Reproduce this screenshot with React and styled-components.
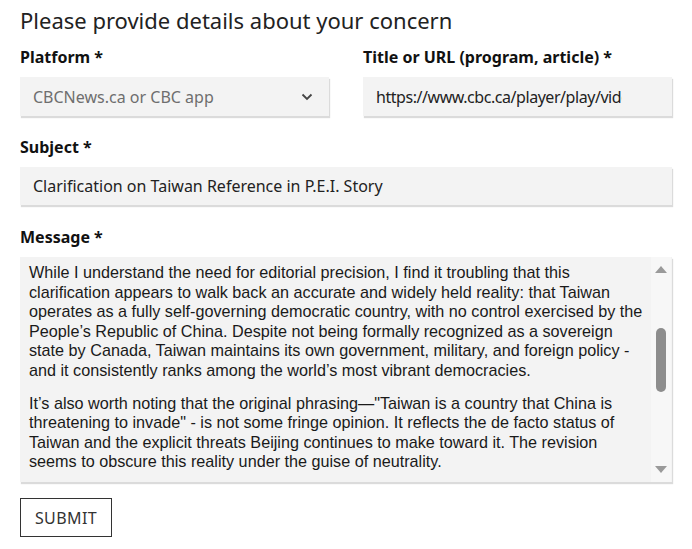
import React from "react";
import styled, { createGlobalStyle } from "styled-components";

const Global = createGlobalStyle`
  html, body { margin: 0; padding: 0; background: #fff; }
  body { font-family: "Noto Sans", "Open Sans", sans-serif; color: #111; }
  * { box-sizing: border-box; }
`;

const Page = styled.form`
  width: 692px;
  padding: 5px 20px 0 20px;
  display: flex;
  flex-direction: column;
`;

const Heading = styled.h2`
  margin: 0 0 11px 0;
  font-size: 22px;
  font-weight: 400;
  line-height: 30px;
  color: #222;
`;

const Row = styled.div`
  display: grid;
  grid-template-columns: minmax(0, 1fr) minmax(0, 1fr);
  column-gap: 34px;
`;

const Field = styled.div`
  display: flex;
  flex-direction: column;
  min-width: 0;
  margin-bottom: ${(p) => p.$mb ?? 20}px;
`;

const Label = styled.label`
  font-size: 16px;
  font-weight: 700;
  line-height: 22px;
  color: #111;
  margin-bottom: 9px;
`;

const InputBox = styled.div`
  height: ${(p) => p.$h || 39}px;
  background: #f3f3f3;
  box-shadow: 1px 2px 1px rgba(0, 0, 0, 0.14);
  display: flex;
  align-items: center;
  padding: 0 ${(p) => p.$pr ?? 13}px 0 13px;
  font-size: 16px;
  color: ${(p) => (p.$muted ? "#6e6e6e" : "#222")};
  white-space: nowrap;
  overflow: hidden;
`;

const Clip = styled.span`
  display: block;
  overflow: hidden;
  flex: 1;
  min-width: 0;
  letter-spacing: -0.45px;
`;

const SelectText = styled.span`
  flex: 1;
`;

const Chevron = styled.svg`
  width: 12px;
  height: 8px;
  margin-right: 3px;
`;

const MessageBox = styled.div`
  height: 225px;
  background: #f3f3f3;
  box-shadow: 1px 2px 1px rgba(0, 0, 0, 0.14);
  display: flex;
`;

const MessageText = styled.div`
  flex: 1;
  padding: 6px 8px 0 9px;
  font-family: "Liberation Sans", Arial, sans-serif;
  font-size: 16.2px;
  line-height: 19.5px;
  color: #1a1a1a;
  overflow: hidden;
`;

const Para = styled.p`
  margin: 0 0 13.5px 0;
`;

const Line = styled.span`
  display: block;
  white-space: nowrap;
`;

const ScrollTrack = styled.div`
  width: 20px;
  margin-right: 1px;
  background: #f7f7f7;
  display: flex;
  flex-direction: column;
  align-items: center;
  padding: 9px 0 9px;
`;

const Arrow = styled.div`
  width: 0;
  height: 0;
  border-left: 6px solid transparent;
  border-right: 6px solid transparent;
  ${(p) =>
    p.$down
      ? "border-top: 7px solid #9a9a9a;"
      : "border-bottom: 7px solid #9a9a9a;"}
`;

const ThumbArea = styled.div`
  flex: 1;
  display: flex;
  flex-direction: column;
  align-items: center;
  padding-top: 55px;
`;

const Thumb = styled.div`
  width: 10px;
  height: 64px;
  border-radius: 5px;
  background: #8d8d8d;
`;

const Submit = styled.button`
  align-self: flex-start;
  margin-top: 16px;
  width: 92px;
  height: 39px;
  border: 1px solid #333;
  background: #fff;
  font-family: "Noto Sans", "Open Sans", sans-serif;
  font-size: 16px;
  letter-spacing: 0.4px;
  color: #333;
  padding: 0;
`;

const para1 = [
  "While I understand the need for editorial precision, I find it troubling that this",
  "clarification appears to walk back an accurate and widely held reality: that Taiwan",
  "operates as a fully self-governing democratic country, with no control exercised by the",
  "People\u2019s Republic of China. Despite not being formally recognized as a sovereign",
  "state by Canada, Taiwan maintains its own government, military, and foreign policy -",
  "and it consistently ranks among the world\u2019s most vibrant democracies.",
];
const para2 = [
  "It\u2019s also worth noting that the original phrasing\u2014\"Taiwan is a country that China is",
  "threatening to invade\" - is not some fringe opinion. It reflects the de facto status of",
  "Taiwan and the explicit threats Beijing continues to make toward it. The revision",
  "seems to obscure this reality under the guise of neutrality.",
];

export default function App() {
  return (
    <>
      <Global />
      <Page onSubmit={(e) => e.preventDefault()}>
        <Heading>Please provide details about your concern</Heading>
        <Row>
          <Field>
            <Label>Platform *</Label>
            <InputBox $muted>
              <SelectText>CBCNews.ca or CBC app</SelectText>
              <Chevron viewBox="0 0 12 8">
                <path d="M1.5 1.5 L6 6 L10.5 1.5" fill="none" stroke="#444" strokeWidth="1.8" />
              </Chevron>
            </InputBox>
          </Field>
          <Field>
            <Label>Title or URL (program, article) *</Label>
            <InputBox $pr={50}>
              <Clip>https://www.cbc.ca/player/play/video/9.6700000</Clip>
            </InputBox>
          </Field>
        </Row>
        <Field $mb={21}>
          <Label>Subject *</Label>
          <InputBox $h={38}>Clarification on Taiwan Reference in P.E.I. Story</InputBox>
        </Field>
        <Field $mb={0}>
          <Label>Message *</Label>
          <MessageBox>
            <MessageText>
              <Para>
                {para1.map((l, i) => (
                  <Line key={i}>{l}</Line>
                ))}
              </Para>
              <Para>
                {para2.map((l, i) => (
                  <Line key={i}>{l}</Line>
                ))}
              </Para>
            </MessageText>
            <ScrollTrack>
              <Arrow />
              <ThumbArea>
                <Thumb />
              </ThumbArea>
              <Arrow $down />
            </ScrollTrack>
          </MessageBox>
        </Field>
        <Submit type="submit">SUBMIT</Submit>
      </Page>
    </>
  );
}
